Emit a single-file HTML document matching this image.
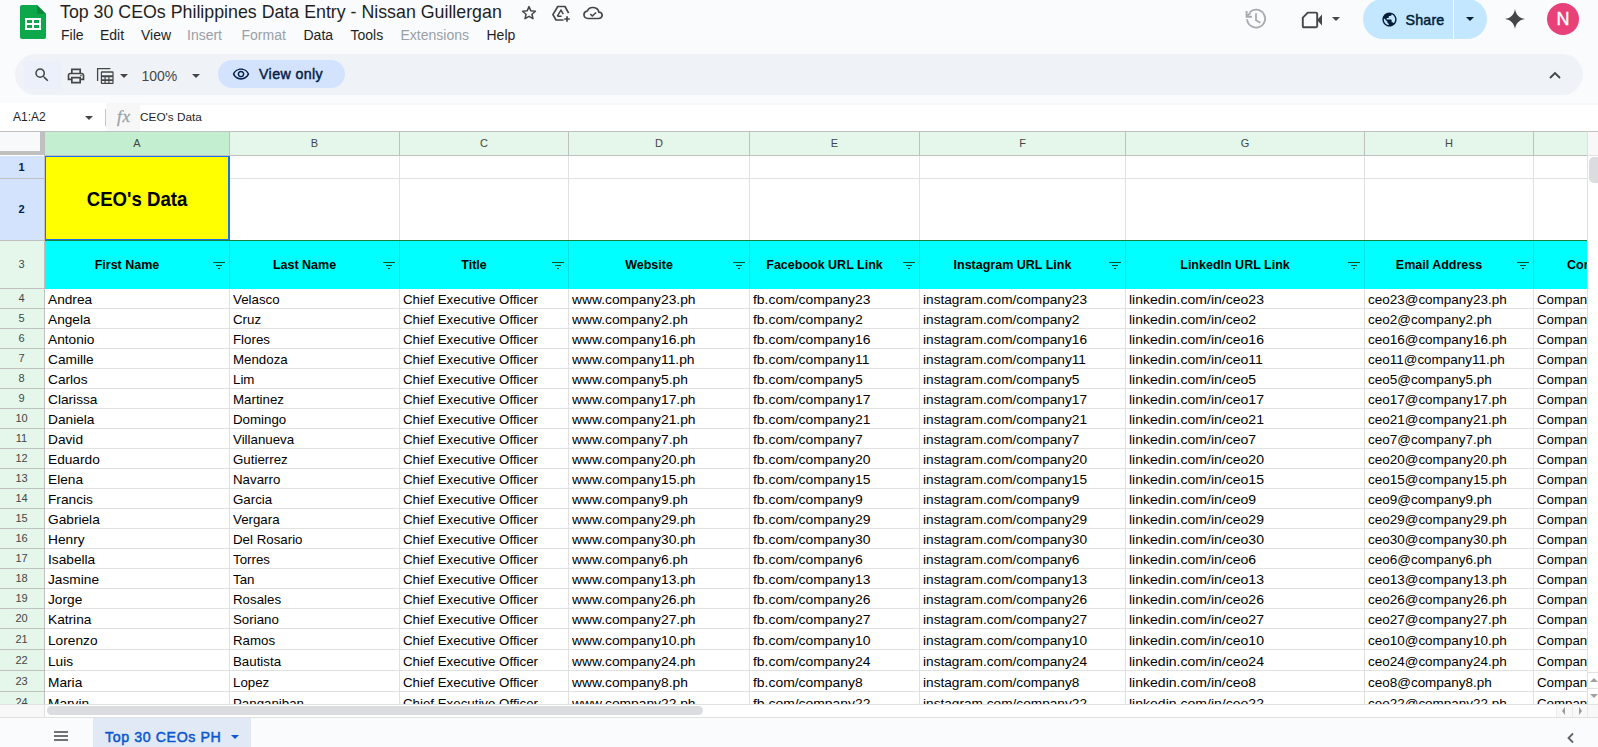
<!DOCTYPE html>
<html><head><meta charset="utf-8"><style>
*{margin:0;padding:0;box-sizing:border-box}
html,body{width:1598px;height:747px;overflow:hidden;background:#f9fbfd;font-family:"Liberation Sans",sans-serif;position:relative}
.a{position:absolute;white-space:nowrap}
.t{position:absolute;white-space:nowrap;line-height:1}
.hl{position:absolute;height:1px}
.vl{position:absolute;width:1px}
.c{position:absolute;white-space:nowrap;font-size:13.3px;color:#000;line-height:1;overflow:hidden}
</style></head><body>

<svg class="a" style="left:20px;top:5px" width="26" height="35" viewBox="0 0 26 35">
<path d="M2 0H17L26 9V32Q26 34 24 34H2Q0 34 0 32V2Q0 0 2 0Z" fill="#0ca84b"/>
<path d="M17 0L26 9H17Z" fill="#078a3a"/>
<rect x="5" y="13" width="16" height="12" fill="#fff"/>
<rect x="7" y="15" width="5" height="3" fill="#0ca84b"/><rect x="14" y="15" width="5" height="3" fill="#0ca84b"/>
<rect x="7" y="20" width="5" height="3" fill="#0ca84b"/><rect x="14" y="20" width="5" height="3" fill="#0ca84b"/>
</svg>
<div class="t" style="left:60px;top:2px;font-size:17.8px;color:#1f1f1f;line-height:20px">Top 30 CEOs Philippines Data Entry - Nissan Guillergan</div>
<svg class="a" style="left:520px;top:4px" width="18" height="18" viewBox="0 0 24 24"><path d="M12 3.5l2.47 5.6 6.1.55-4.62 4.02 1.38 5.96L12 16.5l-5.33 3.13 1.38-5.96L3.43 9.65l6.1-.55z" fill="none" stroke="#444746" stroke-width="2" stroke-linejoin="round"/></svg>
<svg class="a" style="left:551px;top:4px" width="21" height="18" viewBox="0 0 21 18"><path d="M17.6 9.2L14 2.5H6.8L1.9 10.6 5 16H12.6" fill="none" stroke="#444746" stroke-width="1.7" stroke-linejoin="round"/><path d="M6.3 12.2L10 6.2 12.4 10.2M6.3 12.2H10.6" fill="none" stroke="#444746" stroke-width="1.5"/><path d="M16 12.2v5.6M13.2 15h5.6" stroke="#444746" stroke-width="1.7"/></svg>
<svg class="a" style="left:583px;top:6px" width="20" height="13.5" viewBox="0 0 20 15" preserveAspectRatio="none"><path d="M5 13.8H15.5A3.5 3.5 0 0 0 15.8 6.8 6 6 0 0 0 4.3 5.5 4.2 4.2 0 0 0 5 13.8Z" fill="none" stroke="#444746" stroke-width="1.7"/><path d="M7.3 9l2 2 3.8-3.8" fill="none" stroke="#444746" stroke-width="1.6"/></svg>
<div class="t" style="left:61px;top:27.4px;font-size:14px;color:#1f1f1f;line-height:16px">File</div>
<div class="t" style="left:100px;top:27.4px;font-size:14px;color:#1f1f1f;line-height:16px">Edit</div>
<div class="t" style="left:141px;top:27.4px;font-size:14px;color:#1f1f1f;line-height:16px">View</div>
<div class="t" style="left:187px;top:27.4px;font-size:14px;color:#9aa0a6;line-height:16px">Insert</div>
<div class="t" style="left:241.5px;top:27.4px;font-size:14px;color:#9aa0a6;line-height:16px">Format</div>
<div class="t" style="left:303.5px;top:27.4px;font-size:14px;color:#1f1f1f;line-height:16px">Data</div>
<div class="t" style="left:350.5px;top:27.4px;font-size:14px;color:#1f1f1f;line-height:16px">Tools</div>
<div class="t" style="left:400.5px;top:27.4px;font-size:14px;color:#9aa0a6;line-height:16px">Extensions</div>
<div class="t" style="left:486.5px;top:27.4px;font-size:14px;color:#1f1f1f;line-height:16px">Help</div>
<svg class="a" style="left:1244px;top:8px" width="24" height="22" viewBox="0 0 24 22"><path d="M5.6 4.4A9 9 0 1 1 3.1 11.3" fill="none" stroke="#a8abad" stroke-width="1.8"/><path d="M2.6 3V8.7H8" fill="none" stroke="#a8abad" stroke-width="1.9"/><path d="M2.6 8.7L6.4 4.9" stroke="#a8abad" stroke-width="1.9"/><path d="M12 5.3V12.2L16.4 14.8" fill="none" stroke="#a8abad" stroke-width="1.8"/></svg>
<svg class="a" style="left:1301px;top:11px" width="23" height="18" viewBox="0 0 23 18"><path d="M6.8 1.6H15Q16.2 1.6 16.2 2.8V15.1Q16.2 16.3 15 16.3H3Q1.8 16.3 1.8 15.1V6.6Z" fill="none" stroke="#444746" stroke-width="1.9" stroke-linejoin="round"/><path d="M16 9L21 3.6V14.4Z" fill="#444746"/></svg>
<div class="a" style="left:1332px;top:17px;width:0;height:0;border-left:4px solid transparent;border-right:4px solid transparent;border-top:4px solid #444746"></div>
<div class="a" style="left:1363px;top:-1px;width:124px;height:40px;border-radius:20px;background:#c2e7ff"></div>
<div class="a" style="left:1453px;top:-1px;width:1px;height:40px;background:#f9fbfd"></div>
<svg class="a" style="left:1381px;top:11px" width="17" height="17" viewBox="0 0 24 24"><path fill="#001d35" d="M12 2C6.48 2 2 6.48 2 12s4.48 10 10 10 10-4.48 10-10S17.52 2 12 2zm-1 17.93c-3.95-.49-7-3.85-7-7.93 0-.62.08-1.21.21-1.79L9 15v1c0 1.1.9 2 2 2v1.93zm6.9-2.54c-.26-.81-1-1.39-1.9-1.39h-1v-3c0-.55-.45-1-1-1H8v-2h2c.55 0 1-.45 1-1V7h2c1.1 0 2-.9 2-2v-.41c2.93 1.19 5 4.06 5 7.41 0 2.08-.8 3.97-2.1 5.39z"/></svg>
<div class="t" style="left:1405.5px;top:12px;font-size:14.3px;font-weight:normal;-webkit-text-stroke:0.45px #001d35;color:#001d35;line-height:16px;letter-spacing:0.15px">Share</div>
<div class="a" style="left:1465.5px;top:17px;width:0;height:0;border-left:4.5px solid transparent;border-right:4.5px solid transparent;border-top:4.5px solid #001d35"></div>
<svg class="a" style="left:1505px;top:9px" width="20" height="20" viewBox="0 0 20 20"><path d="M10 0C10.8 5.6 14.4 9.2 20 10C14.4 10.8 10.8 14.4 10 20C9.2 14.4 5.6 10.8 0 10C5.6 9.2 9.2 5.6 10 0Z" fill="#444746"/></svg>
<div class="a" style="left:1547px;top:3px;width:32px;height:32px;border-radius:50%;background:#e8417a"></div>
<div class="t" style="left:1547px;top:10px;width:32px;text-align:center;font-size:18px;color:#fff;-webkit-text-stroke:0.4px #fff;line-height:18px">N</div>
<div class="a" style="left:15px;top:54px;width:1568px;height:41px;border-radius:20.5px;background:#eff3f8"></div>
<div class="a" style="left:24px;top:61px;width:37px;height:28px;border-radius:2px;background:#ebf0fa"></div>
<svg class="a" style="left:33px;top:66px" width="18" height="18" viewBox="0 0 24 24"><path fill="#444746" d="M15.5 14h-.79l-.28-.27A6.47 6.47 0 0 0 16 9.5 6.5 6.5 0 1 0 9.5 16c1.61 0 3.09-.59 4.23-1.57l.27.28v.79l5 4.99L20.49 19l-4.99-5zm-6 0C7.01 14 5 11.99 5 9.5S7.01 5 9.5 5 14 7.01 14 9.5 11.99 14 9.5 14z"/></svg>
<svg class="a" style="left:66px;top:66px" width="20" height="20" viewBox="0 0 24 24"><path fill="#444746" d="M19 8h-1V3H6v5H5c-1.66 0-3 1.34-3 3v6h4v4h12v-4h4v-6c0-1.66-1.34-3-3-3zM8 5h8v3H8V5zm8 14H8v-4h8v4zm2-4v-2H6v2H4v-4c0-.55.45-1 1-1h14c.55 0 1 .45 1 1v4h-2z"/><circle cx="18" cy="11.5" r="1" fill="#444746"/></svg>
<svg class="a" style="left:96px;top:67px" width="19" height="18" viewBox="0 0 19 18"><path d="M1.6 14V1.6H14.4" fill="none" stroke="#444746" stroke-width="1.3"/><path fill="#444746" fill-rule="evenodd" d="M5.8 4.2H16.6Q17.6 4.2 17.6 5.2V16Q17.6 17 16.6 17H5.8Q4.8 17 4.8 16V5.2Q4.8 4.2 5.8 4.2ZM6 5.7V8.3H16.4V5.7ZM6 10.2V12.2H8.5V10.2ZM9.7 10.2V12.2H12.3V10.2ZM13.5 10.2V12.2H16.4V10.2ZM6 14V15.8H8.5V14ZM9.7 14V15.8H12.3V14ZM13.5 14V15.8H16.4V14Z"/></svg>
<div class="a" style="left:120px;top:74px;width:0;height:0;border-left:4px solid transparent;border-right:4px solid transparent;border-top:4px solid #444746"></div>
<div class="t" style="left:141.5px;top:69px;font-size:14px;color:#444746;line-height:14px">100%</div>
<div class="a" style="left:191.5px;top:74px;width:0;height:0;border-left:4px solid transparent;border-right:4px solid transparent;border-top:4px solid #444746"></div>
<div class="a" style="left:218px;top:60px;width:127px;height:28px;border-radius:14px;background:#d3e3fd"></div>
<svg class="a" style="left:231px;top:65px" width="20" height="18" viewBox="0 0 24 24"><path fill="#041e49" d="M12 6.5a9.77 9.77 0 0 1 8.82 5.5A9.77 9.77 0 0 1 12 17.5 9.77 9.77 0 0 1 3.18 12 9.77 9.77 0 0 1 12 6.5m0-2C7 4.5 2.73 7.61 1 12c1.73 4.39 6 7.5 11 7.5s9.27-3.11 11-7.5c-1.73-4.39-6-7.5-11-7.5zm0 5a2.5 2.5 0 0 1 0 5 2.5 2.5 0 0 1 0-5m0-2c-2.48 0-4.5 2.02-4.5 4.5s2.02 4.5 4.5 4.5 4.5-2.02 4.5-4.5-2.02-4.5-4.5-4.5z"/></svg>
<div class="t" style="left:259px;top:67px;font-size:14.2px;font-weight:normal;-webkit-text-stroke:0.45px #041e49;color:#041e49;line-height:14px;letter-spacing:0.4px">View only</div>
<svg class="a" style="left:1548px;top:70px" width="14" height="10" viewBox="0 0 14 10"><path d="M2 8L7 3 12 8" fill="none" stroke="#444746" stroke-width="1.9"/></svg>
<div class="a" style="left:0;top:103px;width:1598px;height:28px;background:#fff"></div>
<div class="t" style="left:13px;top:111px;font-size:12px;color:#1f1f1f;line-height:12px">A1:A2</div>
<div class="a" style="left:84.5px;top:116px;width:0;height:0;border-left:4px solid transparent;border-right:4px solid transparent;border-top:4px solid #444746"></div>
<div class="a" style="left:105px;top:109px;width:1px;height:17px;background:#c7c7c7"></div>
<div class="a" style="left:106px;top:103px;width:34px;height:28px;background:#f7f7f7"></div>
<div class="a" style="left:140px;top:103px;width:1458px;height:2px;background:#f8f8f8"></div>
<div class="t" style="left:117px;top:108px;letter-spacing:0.8px;font-size:17px;font-style:italic;color:#9aa0a6;-webkit-text-stroke:0.3px #9aa0a6;line-height:17px;font-family:'Liberation Serif',serif">fx</div>
<div class="t" style="left:140px;top:111px;font-size:11.8px;color:#1f1f1f;line-height:12px">CEO's Data</div>
<div class="a" style="left:0;top:131px;width:1598px;height:573px;background:#fff;overflow:hidden">
<div class="a" style="left:0px;top:0px;width:1598px;height:1px;background:#c0c0c0;"></div>
<div class="a" style="left:0px;top:1px;width:40px;height:19px;background:#f8f9fa;"></div>
<div class="a" style="left:40px;top:1px;width:4px;height:23px;background:#c0c0c0;"></div>
<div class="a" style="left:0px;top:20px;width:44px;height:4px;background:#c0c0c0;"></div>
<div class="a" style="left:45px;top:1px;width:184px;height:23px;background:#c4eed0;"></div>
<div class="a" style="left:229px;top:1px;width:1px;height:24px;background:#c0c0c0;"></div>
<div class="a" style="left:230px;top:1px;width:169px;height:23px;background:#e5f6ea;"></div>
<div class="a" style="left:399px;top:1px;width:1px;height:24px;background:#c0c0c0;"></div>
<div class="a" style="left:400px;top:1px;width:168px;height:23px;background:#e5f6ea;"></div>
<div class="a" style="left:568px;top:1px;width:1px;height:24px;background:#c0c0c0;"></div>
<div class="a" style="left:569px;top:1px;width:180px;height:23px;background:#e5f6ea;"></div>
<div class="a" style="left:749px;top:1px;width:1px;height:24px;background:#c0c0c0;"></div>
<div class="a" style="left:750px;top:1px;width:169px;height:23px;background:#e5f6ea;"></div>
<div class="a" style="left:919px;top:1px;width:1px;height:24px;background:#c0c0c0;"></div>
<div class="a" style="left:920px;top:1px;width:205px;height:23px;background:#e5f6ea;"></div>
<div class="a" style="left:1125px;top:1px;width:1px;height:24px;background:#c0c0c0;"></div>
<div class="a" style="left:1126px;top:1px;width:238px;height:23px;background:#e5f6ea;"></div>
<div class="a" style="left:1364px;top:1px;width:1px;height:24px;background:#c0c0c0;"></div>
<div class="a" style="left:1365px;top:1px;width:168px;height:23px;background:#e5f6ea;"></div>
<div class="a" style="left:1533px;top:1px;width:1px;height:24px;background:#c0c0c0;"></div>
<div class="a" style="left:1534px;top:1px;width:53px;height:23px;background:#e5f6ea;"></div>
<div class="a" style="left:1587px;top:1px;width:1px;height:24px;background:#c0c0c0;"></div>
<div class="a" style="left:44px;top:1px;width:1px;height:23px;background:#c0c0c0;"></div>
<div class="a" style="left:1588px;top:1px;width:10px;height:23px;background:#f8f8f8;"></div>
<div class="a" style="left:44px;top:24px;width:1544px;height:1px;background:#c0c0c0;"></div>
<div class="a" style="left:1588px;top:24px;width:10px;height:1px;background:#e1e1e1;"></div>
<div class="t" style="left:45px;top:6.5px;width:184px;text-align:center;font-size:11px;color:#444746;line-height:11px">A</div>
<div class="t" style="left:230px;top:6.5px;width:169px;text-align:center;font-size:11px;color:#444746;line-height:11px">B</div>
<div class="t" style="left:400px;top:6.5px;width:168px;text-align:center;font-size:11px;color:#444746;line-height:11px">C</div>
<div class="t" style="left:569px;top:6.5px;width:180px;text-align:center;font-size:11px;color:#444746;line-height:11px">D</div>
<div class="t" style="left:750px;top:6.5px;width:169px;text-align:center;font-size:11px;color:#444746;line-height:11px">E</div>
<div class="t" style="left:920px;top:6.5px;width:205px;text-align:center;font-size:11px;color:#444746;line-height:11px">F</div>
<div class="t" style="left:1126px;top:6.5px;width:238px;text-align:center;font-size:11px;color:#444746;line-height:11px">G</div>
<div class="t" style="left:1365px;top:6.5px;width:168px;text-align:center;font-size:11px;color:#444746;line-height:11px">H</div>
<div class="a" style="left:0px;top:25px;width:44px;height:22px;background:#d3e3fd;"></div>
<div class="a" style="left:0px;top:47px;width:44px;height:1px;background:#c0c0c0;"></div>
<div class="t" style="left:0;top:30.5px;width:43px;text-align:center;font-size:11px;font-weight:bold;color:#041e49;line-height:11px">1</div>
<div class="a" style="left:0px;top:48px;width:44px;height:61px;background:#d3e3fd;"></div>
<div class="a" style="left:0px;top:109px;width:44px;height:1px;background:#c0c0c0;"></div>
<div class="t" style="left:0;top:73.0px;width:43px;text-align:center;font-size:11px;font-weight:bold;color:#041e49;line-height:11px">2</div>
<div class="a" style="left:0px;top:110px;width:44px;height:47px;background:#e5f6ea;"></div>
<div class="a" style="left:0px;top:157px;width:44px;height:1px;background:#c0c0c0;"></div>
<div class="t" style="left:0;top:128.0px;width:43px;text-align:center;font-size:11px;font-weight:normal;color:#444746;line-height:11px">3</div>
<div class="a" style="left:0px;top:158px;width:44px;height:19px;background:#e5f6ea;"></div>
<div class="a" style="left:0px;top:177px;width:44px;height:1px;background:#c0c0c0;"></div>
<div class="t" style="left:0;top:162.0px;width:43px;text-align:center;font-size:11px;font-weight:normal;color:#444746;line-height:11px">4</div>
<div class="a" style="left:0px;top:178px;width:44px;height:19px;background:#e5f6ea;"></div>
<div class="a" style="left:0px;top:197px;width:44px;height:1px;background:#c0c0c0;"></div>
<div class="t" style="left:0;top:182.0px;width:43px;text-align:center;font-size:11px;font-weight:normal;color:#444746;line-height:11px">5</div>
<div class="a" style="left:0px;top:198px;width:44px;height:19px;background:#e5f6ea;"></div>
<div class="a" style="left:0px;top:217px;width:44px;height:1px;background:#c0c0c0;"></div>
<div class="t" style="left:0;top:202.0px;width:43px;text-align:center;font-size:11px;font-weight:normal;color:#444746;line-height:11px">6</div>
<div class="a" style="left:0px;top:218px;width:44px;height:19px;background:#e5f6ea;"></div>
<div class="a" style="left:0px;top:237px;width:44px;height:1px;background:#c0c0c0;"></div>
<div class="t" style="left:0;top:222.0px;width:43px;text-align:center;font-size:11px;font-weight:normal;color:#444746;line-height:11px">7</div>
<div class="a" style="left:0px;top:238px;width:44px;height:19px;background:#e5f6ea;"></div>
<div class="a" style="left:0px;top:257px;width:44px;height:1px;background:#c0c0c0;"></div>
<div class="t" style="left:0;top:242.0px;width:43px;text-align:center;font-size:11px;font-weight:normal;color:#444746;line-height:11px">8</div>
<div class="a" style="left:0px;top:258px;width:44px;height:19px;background:#e5f6ea;"></div>
<div class="a" style="left:0px;top:277px;width:44px;height:1px;background:#c0c0c0;"></div>
<div class="t" style="left:0;top:262.0px;width:43px;text-align:center;font-size:11px;font-weight:normal;color:#444746;line-height:11px">9</div>
<div class="a" style="left:0px;top:278px;width:44px;height:19px;background:#e5f6ea;"></div>
<div class="a" style="left:0px;top:297px;width:44px;height:1px;background:#c0c0c0;"></div>
<div class="t" style="left:0;top:282.0px;width:43px;text-align:center;font-size:11px;font-weight:normal;color:#444746;line-height:11px">10</div>
<div class="a" style="left:0px;top:298px;width:44px;height:19px;background:#e5f6ea;"></div>
<div class="a" style="left:0px;top:317px;width:44px;height:1px;background:#c0c0c0;"></div>
<div class="t" style="left:0;top:302.0px;width:43px;text-align:center;font-size:11px;font-weight:normal;color:#444746;line-height:11px">11</div>
<div class="a" style="left:0px;top:318px;width:44px;height:19px;background:#e5f6ea;"></div>
<div class="a" style="left:0px;top:337px;width:44px;height:1px;background:#c0c0c0;"></div>
<div class="t" style="left:0;top:322.0px;width:43px;text-align:center;font-size:11px;font-weight:normal;color:#444746;line-height:11px">12</div>
<div class="a" style="left:0px;top:338px;width:44px;height:19px;background:#e5f6ea;"></div>
<div class="a" style="left:0px;top:357px;width:44px;height:1px;background:#c0c0c0;"></div>
<div class="t" style="left:0;top:342.0px;width:43px;text-align:center;font-size:11px;font-weight:normal;color:#444746;line-height:11px">13</div>
<div class="a" style="left:0px;top:358px;width:44px;height:19px;background:#e5f6ea;"></div>
<div class="a" style="left:0px;top:377px;width:44px;height:1px;background:#c0c0c0;"></div>
<div class="t" style="left:0;top:362.0px;width:43px;text-align:center;font-size:11px;font-weight:normal;color:#444746;line-height:11px">14</div>
<div class="a" style="left:0px;top:378px;width:44px;height:19px;background:#e5f6ea;"></div>
<div class="a" style="left:0px;top:397px;width:44px;height:1px;background:#c0c0c0;"></div>
<div class="t" style="left:0;top:382.0px;width:43px;text-align:center;font-size:11px;font-weight:normal;color:#444746;line-height:11px">15</div>
<div class="a" style="left:0px;top:398px;width:44px;height:19px;background:#e5f6ea;"></div>
<div class="a" style="left:0px;top:417px;width:44px;height:1px;background:#c0c0c0;"></div>
<div class="t" style="left:0;top:402.0px;width:43px;text-align:center;font-size:11px;font-weight:normal;color:#444746;line-height:11px">16</div>
<div class="a" style="left:0px;top:418px;width:44px;height:19px;background:#e5f6ea;"></div>
<div class="a" style="left:0px;top:437px;width:44px;height:1px;background:#c0c0c0;"></div>
<div class="t" style="left:0;top:422.0px;width:43px;text-align:center;font-size:11px;font-weight:normal;color:#444746;line-height:11px">17</div>
<div class="a" style="left:0px;top:438px;width:44px;height:19px;background:#e5f6ea;"></div>
<div class="a" style="left:0px;top:457px;width:44px;height:1px;background:#c0c0c0;"></div>
<div class="t" style="left:0;top:442.0px;width:43px;text-align:center;font-size:11px;font-weight:normal;color:#444746;line-height:11px">18</div>
<div class="a" style="left:0px;top:458px;width:44px;height:19px;background:#e5f6ea;"></div>
<div class="a" style="left:0px;top:477px;width:44px;height:1px;background:#c0c0c0;"></div>
<div class="t" style="left:0;top:462.0px;width:43px;text-align:center;font-size:11px;font-weight:normal;color:#444746;line-height:11px">19</div>
<div class="a" style="left:0px;top:478px;width:44px;height:19px;background:#e5f6ea;"></div>
<div class="a" style="left:0px;top:497px;width:44px;height:1px;background:#c0c0c0;"></div>
<div class="t" style="left:0;top:482.0px;width:43px;text-align:center;font-size:11px;font-weight:normal;color:#444746;line-height:11px">20</div>
<div class="a" style="left:0px;top:498px;width:44px;height:20px;background:#e5f6ea;"></div>
<div class="a" style="left:0px;top:518px;width:44px;height:1px;background:#c0c0c0;"></div>
<div class="t" style="left:0;top:502.5px;width:43px;text-align:center;font-size:11px;font-weight:normal;color:#444746;line-height:11px">21</div>
<div class="a" style="left:0px;top:519px;width:44px;height:20px;background:#e5f6ea;"></div>
<div class="a" style="left:0px;top:539px;width:44px;height:1px;background:#c0c0c0;"></div>
<div class="t" style="left:0;top:523.5px;width:43px;text-align:center;font-size:11px;font-weight:normal;color:#444746;line-height:11px">22</div>
<div class="a" style="left:0px;top:540px;width:44px;height:20px;background:#e5f6ea;"></div>
<div class="a" style="left:0px;top:560px;width:44px;height:1px;background:#c0c0c0;"></div>
<div class="t" style="left:0;top:544.5px;width:43px;text-align:center;font-size:11px;font-weight:normal;color:#444746;line-height:11px">23</div>
<div class="a" style="left:0px;top:561px;width:44px;height:20px;background:#e5f6ea;"></div>
<div class="a" style="left:0px;top:581px;width:44px;height:1px;background:#c0c0c0;"></div>
<div class="t" style="left:0;top:565.5px;width:43px;text-align:center;font-size:11px;font-weight:normal;color:#444746;line-height:11px">24</div>
<div class="a" style="left:44px;top:25px;width:1px;height:548px;background:#c0c0c0;"></div>
<div class="a" style="left:45px;top:110px;width:1542px;height:48px;background:#00ffff;"></div>
<div class="a" style="left:45px;top:25px;width:184px;height:84px;background:#ffff00;"></div>
<div class="a" style="left:229px;top:47px;width:1358px;height:1px;background:#e1e1e1;"></div>
<div class="a" style="left:45px;top:177px;width:1542px;height:1px;background:#e1e1e1;"></div>
<div class="a" style="left:45px;top:197px;width:1542px;height:1px;background:#e1e1e1;"></div>
<div class="a" style="left:45px;top:217px;width:1542px;height:1px;background:#e1e1e1;"></div>
<div class="a" style="left:45px;top:237px;width:1542px;height:1px;background:#e1e1e1;"></div>
<div class="a" style="left:45px;top:257px;width:1542px;height:1px;background:#e1e1e1;"></div>
<div class="a" style="left:45px;top:277px;width:1542px;height:1px;background:#e1e1e1;"></div>
<div class="a" style="left:45px;top:297px;width:1542px;height:1px;background:#e1e1e1;"></div>
<div class="a" style="left:45px;top:317px;width:1542px;height:1px;background:#e1e1e1;"></div>
<div class="a" style="left:45px;top:337px;width:1542px;height:1px;background:#e1e1e1;"></div>
<div class="a" style="left:45px;top:357px;width:1542px;height:1px;background:#e1e1e1;"></div>
<div class="a" style="left:45px;top:377px;width:1542px;height:1px;background:#e1e1e1;"></div>
<div class="a" style="left:45px;top:397px;width:1542px;height:1px;background:#e1e1e1;"></div>
<div class="a" style="left:45px;top:417px;width:1542px;height:1px;background:#e1e1e1;"></div>
<div class="a" style="left:45px;top:437px;width:1542px;height:1px;background:#e1e1e1;"></div>
<div class="a" style="left:45px;top:457px;width:1542px;height:1px;background:#e1e1e1;"></div>
<div class="a" style="left:45px;top:477px;width:1542px;height:1px;background:#e1e1e1;"></div>
<div class="a" style="left:45px;top:497px;width:1542px;height:1px;background:#e1e1e1;"></div>
<div class="a" style="left:45px;top:518px;width:1542px;height:1px;background:#e1e1e1;"></div>
<div class="a" style="left:45px;top:539px;width:1542px;height:1px;background:#e1e1e1;"></div>
<div class="a" style="left:45px;top:560px;width:1542px;height:1px;background:#e1e1e1;"></div>
<div class="a" style="left:45px;top:581px;width:1542px;height:1px;background:#e1e1e1;"></div>
<div class="a" style="left:45px;top:109px;width:1542px;height:1px;background:#188038;"></div>
<div class="a" style="left:229px;top:25px;width:1px;height:84px;background:#e1e1e1;"></div>
<div class="a" style="left:229px;top:110px;width:1px;height:47px;background:#00e3e3;"></div>
<div class="a" style="left:229px;top:158px;width:1px;height:415px;background:#e1e1e1;"></div>
<div class="a" style="left:399px;top:25px;width:1px;height:84px;background:#e1e1e1;"></div>
<div class="a" style="left:399px;top:110px;width:1px;height:47px;background:#00e3e3;"></div>
<div class="a" style="left:399px;top:158px;width:1px;height:415px;background:#e1e1e1;"></div>
<div class="a" style="left:568px;top:25px;width:1px;height:84px;background:#e1e1e1;"></div>
<div class="a" style="left:568px;top:110px;width:1px;height:47px;background:#00e3e3;"></div>
<div class="a" style="left:568px;top:158px;width:1px;height:415px;background:#e1e1e1;"></div>
<div class="a" style="left:749px;top:25px;width:1px;height:84px;background:#e1e1e1;"></div>
<div class="a" style="left:749px;top:110px;width:1px;height:47px;background:#00e3e3;"></div>
<div class="a" style="left:749px;top:158px;width:1px;height:415px;background:#e1e1e1;"></div>
<div class="a" style="left:919px;top:25px;width:1px;height:84px;background:#e1e1e1;"></div>
<div class="a" style="left:919px;top:110px;width:1px;height:47px;background:#00e3e3;"></div>
<div class="a" style="left:919px;top:158px;width:1px;height:415px;background:#e1e1e1;"></div>
<div class="a" style="left:1125px;top:25px;width:1px;height:84px;background:#e1e1e1;"></div>
<div class="a" style="left:1125px;top:110px;width:1px;height:47px;background:#00e3e3;"></div>
<div class="a" style="left:1125px;top:158px;width:1px;height:415px;background:#e1e1e1;"></div>
<div class="a" style="left:1364px;top:25px;width:1px;height:84px;background:#e1e1e1;"></div>
<div class="a" style="left:1364px;top:110px;width:1px;height:47px;background:#00e3e3;"></div>
<div class="a" style="left:1364px;top:158px;width:1px;height:415px;background:#e1e1e1;"></div>
<div class="a" style="left:1533px;top:25px;width:1px;height:84px;background:#e1e1e1;"></div>
<div class="a" style="left:1533px;top:110px;width:1px;height:47px;background:#00e3e3;"></div>
<div class="a" style="left:1533px;top:158px;width:1px;height:415px;background:#e1e1e1;"></div>
<div class="a" style="left:1587px;top:0px;width:1px;height:573px;background:#e1e1e1;"></div>
<div class="a" style="left:45px;top:25px;width:184px;height:1px;background:#1a73e8;"></div>
<div class="a" style="left:45px;top:108px;width:184px;height:1px;background:#1a73e8;"></div>
<div class="a" style="left:45px;top:25px;width:1px;height:84px;background:#1a73e8;"></div>
<div class="a" style="left:228px;top:25px;width:2px;height:84px;background:#1a73e8;"></div>
<div class="t" style="left:45px;top:58px;width:184px;text-align:center;font-size:18.6px;font-weight:bold;color:#000;line-height:20px;transform:scaleY(1.12)">CEO's Data</div>
<div class="t" style="left:45px;top:126px;width:164px;text-align:center;font-size:12.5px;font-weight:bold;color:#000;line-height:16px">First Name</div>
<svg class="a" style="left:213px;top:131px" width="12" height="7" viewBox="0 0 12 7"><path d="M0 .5H12M3 3.5H9M5 6.5H7" stroke="#114d20" stroke-width="1"/></svg>
<div class="t" style="left:230px;top:126px;width:149px;text-align:center;font-size:12.5px;font-weight:bold;color:#000;line-height:16px">Last Name</div>
<svg class="a" style="left:383px;top:131px" width="12" height="7" viewBox="0 0 12 7"><path d="M0 .5H12M3 3.5H9M5 6.5H7" stroke="#114d20" stroke-width="1"/></svg>
<div class="t" style="left:400px;top:126px;width:148px;text-align:center;font-size:12.5px;font-weight:bold;color:#000;line-height:16px">Title</div>
<svg class="a" style="left:552px;top:131px" width="12" height="7" viewBox="0 0 12 7"><path d="M0 .5H12M3 3.5H9M5 6.5H7" stroke="#114d20" stroke-width="1"/></svg>
<div class="t" style="left:569px;top:126px;width:160px;text-align:center;font-size:12.5px;font-weight:bold;color:#000;line-height:16px">Website</div>
<svg class="a" style="left:733px;top:131px" width="12" height="7" viewBox="0 0 12 7"><path d="M0 .5H12M3 3.5H9M5 6.5H7" stroke="#114d20" stroke-width="1"/></svg>
<div class="t" style="left:750px;top:126px;width:149px;text-align:center;font-size:12.5px;font-weight:bold;color:#000;line-height:16px">Facebook URL Link</div>
<svg class="a" style="left:903px;top:131px" width="12" height="7" viewBox="0 0 12 7"><path d="M0 .5H12M3 3.5H9M5 6.5H7" stroke="#114d20" stroke-width="1"/></svg>
<div class="t" style="left:920px;top:126px;width:185px;text-align:center;font-size:12.5px;font-weight:bold;color:#000;line-height:16px">Instagram URL Link</div>
<svg class="a" style="left:1109px;top:131px" width="12" height="7" viewBox="0 0 12 7"><path d="M0 .5H12M3 3.5H9M5 6.5H7" stroke="#114d20" stroke-width="1"/></svg>
<div class="t" style="left:1126px;top:126px;width:218px;text-align:center;font-size:12.5px;font-weight:bold;color:#000;line-height:16px">LinkedIn URL Link</div>
<svg class="a" style="left:1348px;top:131px" width="12" height="7" viewBox="0 0 12 7"><path d="M0 .5H12M3 3.5H9M5 6.5H7" stroke="#114d20" stroke-width="1"/></svg>
<div class="t" style="left:1365px;top:126px;width:148px;text-align:center;font-size:12.5px;font-weight:bold;color:#000;line-height:16px">Email Address</div>
<svg class="a" style="left:1517px;top:131px" width="12" height="7" viewBox="0 0 12 7"><path d="M0 .5H12M3 3.5H9M5 6.5H7" stroke="#114d20" stroke-width="1"/></svg>
<div class="c" style="left:1534px;top:126px;width:53px;height:16px;font-weight:bold;font-size:12.5px;line-height:16px;padding-left:33px">Company</div>
<div class="c" style="left:47.5px;top:160.92px;width:178.9px;height:16px;line-height:16px;font-size:13.5px;transform:scaleX(1.0147);transform-origin:0 0">Andrea</div>
<div class="c" style="left:232.5px;top:160.92px;width:169.0px;height:16px;line-height:16px;font-size:13.5px;transform:scaleX(0.9852);transform-origin:0 0">Velasco</div>
<div class="c" style="left:402.5px;top:160.92px;width:168.0px;height:16px;line-height:16px;font-size:13.5px;transform:scaleX(0.9852);transform-origin:0 0">Chief Executive Officer</div>
<div class="c" style="left:571.5px;top:160.92px;width:173.6px;height:16px;line-height:16px;font-size:13.5px;transform:scaleX(1.0226);transform-origin:0 0">www.company23.ph</div>
<div class="c" style="left:752.5px;top:160.92px;width:161.7px;height:16px;line-height:16px;font-size:13.5px;transform:scaleX(1.0295);transform-origin:0 0">fb.com/company23</div>
<div class="c" style="left:922.5px;top:160.92px;width:200.1px;height:16px;line-height:16px;font-size:13.5px;transform:scaleX(1.0118);transform-origin:0 0">instagram.com/company23</div>
<div class="c" style="left:1128.5px;top:160.92px;width:226.6px;height:16px;line-height:16px;font-size:13.5px;transform:scaleX(1.0394);transform-origin:0 0">linkedin.com/in/ceo23</div>
<div class="c" style="left:1367.5px;top:160.92px;width:165.8px;height:16px;line-height:16px;font-size:13.5px;transform:scaleX(0.9980);transform-origin:0 0">ceo23@company23.ph</div>
<div class="c" style="left:1536.5px;top:160.92px;width:51.3px;height:16px;line-height:16px;font-size:13.5px;transform:scaleX(0.9852);transform-origin:0 0">Company</div>
<div class="c" style="left:47.5px;top:180.92px;width:178.9px;height:16px;line-height:16px;font-size:13.5px;transform:scaleX(1.0147);transform-origin:0 0">Angela</div>
<div class="c" style="left:232.5px;top:180.92px;width:169.0px;height:16px;line-height:16px;font-size:13.5px;transform:scaleX(0.9852);transform-origin:0 0">Cruz</div>
<div class="c" style="left:402.5px;top:180.92px;width:168.0px;height:16px;line-height:16px;font-size:13.5px;transform:scaleX(0.9852);transform-origin:0 0">Chief Executive Officer</div>
<div class="c" style="left:571.5px;top:180.92px;width:173.6px;height:16px;line-height:16px;font-size:13.5px;transform:scaleX(1.0226);transform-origin:0 0">www.company2.ph</div>
<div class="c" style="left:752.5px;top:180.92px;width:161.7px;height:16px;line-height:16px;font-size:13.5px;transform:scaleX(1.0295);transform-origin:0 0">fb.com/company2</div>
<div class="c" style="left:922.5px;top:180.92px;width:200.1px;height:16px;line-height:16px;font-size:13.5px;transform:scaleX(1.0118);transform-origin:0 0">instagram.com/company2</div>
<div class="c" style="left:1128.5px;top:180.92px;width:226.6px;height:16px;line-height:16px;font-size:13.5px;transform:scaleX(1.0394);transform-origin:0 0">linkedin.com/in/ceo2</div>
<div class="c" style="left:1367.5px;top:180.92px;width:165.8px;height:16px;line-height:16px;font-size:13.5px;transform:scaleX(0.9980);transform-origin:0 0">ceo2@company2.ph</div>
<div class="c" style="left:1536.5px;top:180.92px;width:51.3px;height:16px;line-height:16px;font-size:13.5px;transform:scaleX(0.9852);transform-origin:0 0">Company</div>
<div class="c" style="left:47.5px;top:200.92px;width:178.9px;height:16px;line-height:16px;font-size:13.5px;transform:scaleX(1.0147);transform-origin:0 0">Antonio</div>
<div class="c" style="left:232.5px;top:200.92px;width:169.0px;height:16px;line-height:16px;font-size:13.5px;transform:scaleX(0.9852);transform-origin:0 0">Flores</div>
<div class="c" style="left:402.5px;top:200.92px;width:168.0px;height:16px;line-height:16px;font-size:13.5px;transform:scaleX(0.9852);transform-origin:0 0">Chief Executive Officer</div>
<div class="c" style="left:571.5px;top:200.92px;width:173.6px;height:16px;line-height:16px;font-size:13.5px;transform:scaleX(1.0226);transform-origin:0 0">www.company16.ph</div>
<div class="c" style="left:752.5px;top:200.92px;width:161.7px;height:16px;line-height:16px;font-size:13.5px;transform:scaleX(1.0295);transform-origin:0 0">fb.com/company16</div>
<div class="c" style="left:922.5px;top:200.92px;width:200.1px;height:16px;line-height:16px;font-size:13.5px;transform:scaleX(1.0118);transform-origin:0 0">instagram.com/company16</div>
<div class="c" style="left:1128.5px;top:200.92px;width:226.6px;height:16px;line-height:16px;font-size:13.5px;transform:scaleX(1.0394);transform-origin:0 0">linkedin.com/in/ceo16</div>
<div class="c" style="left:1367.5px;top:200.92px;width:165.8px;height:16px;line-height:16px;font-size:13.5px;transform:scaleX(0.9980);transform-origin:0 0">ceo16@company16.ph</div>
<div class="c" style="left:1536.5px;top:200.92px;width:51.3px;height:16px;line-height:16px;font-size:13.5px;transform:scaleX(0.9852);transform-origin:0 0">Company</div>
<div class="c" style="left:47.5px;top:220.92px;width:178.9px;height:16px;line-height:16px;font-size:13.5px;transform:scaleX(1.0147);transform-origin:0 0">Camille</div>
<div class="c" style="left:232.5px;top:220.92px;width:169.0px;height:16px;line-height:16px;font-size:13.5px;transform:scaleX(0.9852);transform-origin:0 0">Mendoza</div>
<div class="c" style="left:402.5px;top:220.92px;width:168.0px;height:16px;line-height:16px;font-size:13.5px;transform:scaleX(0.9852);transform-origin:0 0">Chief Executive Officer</div>
<div class="c" style="left:571.5px;top:220.92px;width:173.6px;height:16px;line-height:16px;font-size:13.5px;transform:scaleX(1.0226);transform-origin:0 0">www.company11.ph</div>
<div class="c" style="left:752.5px;top:220.92px;width:161.7px;height:16px;line-height:16px;font-size:13.5px;transform:scaleX(1.0295);transform-origin:0 0">fb.com/company11</div>
<div class="c" style="left:922.5px;top:220.92px;width:200.1px;height:16px;line-height:16px;font-size:13.5px;transform:scaleX(1.0118);transform-origin:0 0">instagram.com/company11</div>
<div class="c" style="left:1128.5px;top:220.92px;width:226.6px;height:16px;line-height:16px;font-size:13.5px;transform:scaleX(1.0394);transform-origin:0 0">linkedin.com/in/ceo11</div>
<div class="c" style="left:1367.5px;top:220.92px;width:165.8px;height:16px;line-height:16px;font-size:13.5px;transform:scaleX(0.9980);transform-origin:0 0">ceo11@company11.ph</div>
<div class="c" style="left:1536.5px;top:220.92px;width:51.3px;height:16px;line-height:16px;font-size:13.5px;transform:scaleX(0.9852);transform-origin:0 0">Company</div>
<div class="c" style="left:47.5px;top:240.92px;width:178.9px;height:16px;line-height:16px;font-size:13.5px;transform:scaleX(1.0147);transform-origin:0 0">Carlos</div>
<div class="c" style="left:232.5px;top:240.92px;width:169.0px;height:16px;line-height:16px;font-size:13.5px;transform:scaleX(0.9852);transform-origin:0 0">Lim</div>
<div class="c" style="left:402.5px;top:240.92px;width:168.0px;height:16px;line-height:16px;font-size:13.5px;transform:scaleX(0.9852);transform-origin:0 0">Chief Executive Officer</div>
<div class="c" style="left:571.5px;top:240.92px;width:173.6px;height:16px;line-height:16px;font-size:13.5px;transform:scaleX(1.0226);transform-origin:0 0">www.company5.ph</div>
<div class="c" style="left:752.5px;top:240.92px;width:161.7px;height:16px;line-height:16px;font-size:13.5px;transform:scaleX(1.0295);transform-origin:0 0">fb.com/company5</div>
<div class="c" style="left:922.5px;top:240.92px;width:200.1px;height:16px;line-height:16px;font-size:13.5px;transform:scaleX(1.0118);transform-origin:0 0">instagram.com/company5</div>
<div class="c" style="left:1128.5px;top:240.92px;width:226.6px;height:16px;line-height:16px;font-size:13.5px;transform:scaleX(1.0394);transform-origin:0 0">linkedin.com/in/ceo5</div>
<div class="c" style="left:1367.5px;top:240.92px;width:165.8px;height:16px;line-height:16px;font-size:13.5px;transform:scaleX(0.9980);transform-origin:0 0">ceo5@company5.ph</div>
<div class="c" style="left:1536.5px;top:240.92px;width:51.3px;height:16px;line-height:16px;font-size:13.5px;transform:scaleX(0.9852);transform-origin:0 0">Company</div>
<div class="c" style="left:47.5px;top:260.92px;width:178.9px;height:16px;line-height:16px;font-size:13.5px;transform:scaleX(1.0147);transform-origin:0 0">Clarissa</div>
<div class="c" style="left:232.5px;top:260.92px;width:169.0px;height:16px;line-height:16px;font-size:13.5px;transform:scaleX(0.9852);transform-origin:0 0">Martinez</div>
<div class="c" style="left:402.5px;top:260.92px;width:168.0px;height:16px;line-height:16px;font-size:13.5px;transform:scaleX(0.9852);transform-origin:0 0">Chief Executive Officer</div>
<div class="c" style="left:571.5px;top:260.92px;width:173.6px;height:16px;line-height:16px;font-size:13.5px;transform:scaleX(1.0226);transform-origin:0 0">www.company17.ph</div>
<div class="c" style="left:752.5px;top:260.92px;width:161.7px;height:16px;line-height:16px;font-size:13.5px;transform:scaleX(1.0295);transform-origin:0 0">fb.com/company17</div>
<div class="c" style="left:922.5px;top:260.92px;width:200.1px;height:16px;line-height:16px;font-size:13.5px;transform:scaleX(1.0118);transform-origin:0 0">instagram.com/company17</div>
<div class="c" style="left:1128.5px;top:260.92px;width:226.6px;height:16px;line-height:16px;font-size:13.5px;transform:scaleX(1.0394);transform-origin:0 0">linkedin.com/in/ceo17</div>
<div class="c" style="left:1367.5px;top:260.92px;width:165.8px;height:16px;line-height:16px;font-size:13.5px;transform:scaleX(0.9980);transform-origin:0 0">ceo17@company17.ph</div>
<div class="c" style="left:1536.5px;top:260.92px;width:51.3px;height:16px;line-height:16px;font-size:13.5px;transform:scaleX(0.9852);transform-origin:0 0">Company</div>
<div class="c" style="left:47.5px;top:280.92px;width:178.9px;height:16px;line-height:16px;font-size:13.5px;transform:scaleX(1.0147);transform-origin:0 0">Daniela</div>
<div class="c" style="left:232.5px;top:280.92px;width:169.0px;height:16px;line-height:16px;font-size:13.5px;transform:scaleX(0.9852);transform-origin:0 0">Domingo</div>
<div class="c" style="left:402.5px;top:280.92px;width:168.0px;height:16px;line-height:16px;font-size:13.5px;transform:scaleX(0.9852);transform-origin:0 0">Chief Executive Officer</div>
<div class="c" style="left:571.5px;top:280.92px;width:173.6px;height:16px;line-height:16px;font-size:13.5px;transform:scaleX(1.0226);transform-origin:0 0">www.company21.ph</div>
<div class="c" style="left:752.5px;top:280.92px;width:161.7px;height:16px;line-height:16px;font-size:13.5px;transform:scaleX(1.0295);transform-origin:0 0">fb.com/company21</div>
<div class="c" style="left:922.5px;top:280.92px;width:200.1px;height:16px;line-height:16px;font-size:13.5px;transform:scaleX(1.0118);transform-origin:0 0">instagram.com/company21</div>
<div class="c" style="left:1128.5px;top:280.92px;width:226.6px;height:16px;line-height:16px;font-size:13.5px;transform:scaleX(1.0394);transform-origin:0 0">linkedin.com/in/ceo21</div>
<div class="c" style="left:1367.5px;top:280.92px;width:165.8px;height:16px;line-height:16px;font-size:13.5px;transform:scaleX(0.9980);transform-origin:0 0">ceo21@company21.ph</div>
<div class="c" style="left:1536.5px;top:280.92px;width:51.3px;height:16px;line-height:16px;font-size:13.5px;transform:scaleX(0.9852);transform-origin:0 0">Company</div>
<div class="c" style="left:47.5px;top:300.92px;width:178.9px;height:16px;line-height:16px;font-size:13.5px;transform:scaleX(1.0147);transform-origin:0 0">David</div>
<div class="c" style="left:232.5px;top:300.92px;width:169.0px;height:16px;line-height:16px;font-size:13.5px;transform:scaleX(0.9852);transform-origin:0 0">Villanueva</div>
<div class="c" style="left:402.5px;top:300.92px;width:168.0px;height:16px;line-height:16px;font-size:13.5px;transform:scaleX(0.9852);transform-origin:0 0">Chief Executive Officer</div>
<div class="c" style="left:571.5px;top:300.92px;width:173.6px;height:16px;line-height:16px;font-size:13.5px;transform:scaleX(1.0226);transform-origin:0 0">www.company7.ph</div>
<div class="c" style="left:752.5px;top:300.92px;width:161.7px;height:16px;line-height:16px;font-size:13.5px;transform:scaleX(1.0295);transform-origin:0 0">fb.com/company7</div>
<div class="c" style="left:922.5px;top:300.92px;width:200.1px;height:16px;line-height:16px;font-size:13.5px;transform:scaleX(1.0118);transform-origin:0 0">instagram.com/company7</div>
<div class="c" style="left:1128.5px;top:300.92px;width:226.6px;height:16px;line-height:16px;font-size:13.5px;transform:scaleX(1.0394);transform-origin:0 0">linkedin.com/in/ceo7</div>
<div class="c" style="left:1367.5px;top:300.92px;width:165.8px;height:16px;line-height:16px;font-size:13.5px;transform:scaleX(0.9980);transform-origin:0 0">ceo7@company7.ph</div>
<div class="c" style="left:1536.5px;top:300.92px;width:51.3px;height:16px;line-height:16px;font-size:13.5px;transform:scaleX(0.9852);transform-origin:0 0">Company</div>
<div class="c" style="left:47.5px;top:320.92px;width:178.9px;height:16px;line-height:16px;font-size:13.5px;transform:scaleX(1.0147);transform-origin:0 0">Eduardo</div>
<div class="c" style="left:232.5px;top:320.92px;width:169.0px;height:16px;line-height:16px;font-size:13.5px;transform:scaleX(0.9852);transform-origin:0 0">Gutierrez</div>
<div class="c" style="left:402.5px;top:320.92px;width:168.0px;height:16px;line-height:16px;font-size:13.5px;transform:scaleX(0.9852);transform-origin:0 0">Chief Executive Officer</div>
<div class="c" style="left:571.5px;top:320.92px;width:173.6px;height:16px;line-height:16px;font-size:13.5px;transform:scaleX(1.0226);transform-origin:0 0">www.company20.ph</div>
<div class="c" style="left:752.5px;top:320.92px;width:161.7px;height:16px;line-height:16px;font-size:13.5px;transform:scaleX(1.0295);transform-origin:0 0">fb.com/company20</div>
<div class="c" style="left:922.5px;top:320.92px;width:200.1px;height:16px;line-height:16px;font-size:13.5px;transform:scaleX(1.0118);transform-origin:0 0">instagram.com/company20</div>
<div class="c" style="left:1128.5px;top:320.92px;width:226.6px;height:16px;line-height:16px;font-size:13.5px;transform:scaleX(1.0394);transform-origin:0 0">linkedin.com/in/ceo20</div>
<div class="c" style="left:1367.5px;top:320.92px;width:165.8px;height:16px;line-height:16px;font-size:13.5px;transform:scaleX(0.9980);transform-origin:0 0">ceo20@company20.ph</div>
<div class="c" style="left:1536.5px;top:320.92px;width:51.3px;height:16px;line-height:16px;font-size:13.5px;transform:scaleX(0.9852);transform-origin:0 0">Company</div>
<div class="c" style="left:47.5px;top:340.92px;width:178.9px;height:16px;line-height:16px;font-size:13.5px;transform:scaleX(1.0147);transform-origin:0 0">Elena</div>
<div class="c" style="left:232.5px;top:340.92px;width:169.0px;height:16px;line-height:16px;font-size:13.5px;transform:scaleX(0.9852);transform-origin:0 0">Navarro</div>
<div class="c" style="left:402.5px;top:340.92px;width:168.0px;height:16px;line-height:16px;font-size:13.5px;transform:scaleX(0.9852);transform-origin:0 0">Chief Executive Officer</div>
<div class="c" style="left:571.5px;top:340.92px;width:173.6px;height:16px;line-height:16px;font-size:13.5px;transform:scaleX(1.0226);transform-origin:0 0">www.company15.ph</div>
<div class="c" style="left:752.5px;top:340.92px;width:161.7px;height:16px;line-height:16px;font-size:13.5px;transform:scaleX(1.0295);transform-origin:0 0">fb.com/company15</div>
<div class="c" style="left:922.5px;top:340.92px;width:200.1px;height:16px;line-height:16px;font-size:13.5px;transform:scaleX(1.0118);transform-origin:0 0">instagram.com/company15</div>
<div class="c" style="left:1128.5px;top:340.92px;width:226.6px;height:16px;line-height:16px;font-size:13.5px;transform:scaleX(1.0394);transform-origin:0 0">linkedin.com/in/ceo15</div>
<div class="c" style="left:1367.5px;top:340.92px;width:165.8px;height:16px;line-height:16px;font-size:13.5px;transform:scaleX(0.9980);transform-origin:0 0">ceo15@company15.ph</div>
<div class="c" style="left:1536.5px;top:340.92px;width:51.3px;height:16px;line-height:16px;font-size:13.5px;transform:scaleX(0.9852);transform-origin:0 0">Company</div>
<div class="c" style="left:47.5px;top:360.92px;width:178.9px;height:16px;line-height:16px;font-size:13.5px;transform:scaleX(1.0147);transform-origin:0 0">Francis</div>
<div class="c" style="left:232.5px;top:360.92px;width:169.0px;height:16px;line-height:16px;font-size:13.5px;transform:scaleX(0.9852);transform-origin:0 0">Garcia</div>
<div class="c" style="left:402.5px;top:360.92px;width:168.0px;height:16px;line-height:16px;font-size:13.5px;transform:scaleX(0.9852);transform-origin:0 0">Chief Executive Officer</div>
<div class="c" style="left:571.5px;top:360.92px;width:173.6px;height:16px;line-height:16px;font-size:13.5px;transform:scaleX(1.0226);transform-origin:0 0">www.company9.ph</div>
<div class="c" style="left:752.5px;top:360.92px;width:161.7px;height:16px;line-height:16px;font-size:13.5px;transform:scaleX(1.0295);transform-origin:0 0">fb.com/company9</div>
<div class="c" style="left:922.5px;top:360.92px;width:200.1px;height:16px;line-height:16px;font-size:13.5px;transform:scaleX(1.0118);transform-origin:0 0">instagram.com/company9</div>
<div class="c" style="left:1128.5px;top:360.92px;width:226.6px;height:16px;line-height:16px;font-size:13.5px;transform:scaleX(1.0394);transform-origin:0 0">linkedin.com/in/ceo9</div>
<div class="c" style="left:1367.5px;top:360.92px;width:165.8px;height:16px;line-height:16px;font-size:13.5px;transform:scaleX(0.9980);transform-origin:0 0">ceo9@company9.ph</div>
<div class="c" style="left:1536.5px;top:360.92px;width:51.3px;height:16px;line-height:16px;font-size:13.5px;transform:scaleX(0.9852);transform-origin:0 0">Company</div>
<div class="c" style="left:47.5px;top:380.92px;width:178.9px;height:16px;line-height:16px;font-size:13.5px;transform:scaleX(1.0147);transform-origin:0 0">Gabriela</div>
<div class="c" style="left:232.5px;top:380.92px;width:169.0px;height:16px;line-height:16px;font-size:13.5px;transform:scaleX(0.9852);transform-origin:0 0">Vergara</div>
<div class="c" style="left:402.5px;top:380.92px;width:168.0px;height:16px;line-height:16px;font-size:13.5px;transform:scaleX(0.9852);transform-origin:0 0">Chief Executive Officer</div>
<div class="c" style="left:571.5px;top:380.92px;width:173.6px;height:16px;line-height:16px;font-size:13.5px;transform:scaleX(1.0226);transform-origin:0 0">www.company29.ph</div>
<div class="c" style="left:752.5px;top:380.92px;width:161.7px;height:16px;line-height:16px;font-size:13.5px;transform:scaleX(1.0295);transform-origin:0 0">fb.com/company29</div>
<div class="c" style="left:922.5px;top:380.92px;width:200.1px;height:16px;line-height:16px;font-size:13.5px;transform:scaleX(1.0118);transform-origin:0 0">instagram.com/company29</div>
<div class="c" style="left:1128.5px;top:380.92px;width:226.6px;height:16px;line-height:16px;font-size:13.5px;transform:scaleX(1.0394);transform-origin:0 0">linkedin.com/in/ceo29</div>
<div class="c" style="left:1367.5px;top:380.92px;width:165.8px;height:16px;line-height:16px;font-size:13.5px;transform:scaleX(0.9980);transform-origin:0 0">ceo29@company29.ph</div>
<div class="c" style="left:1536.5px;top:380.92px;width:51.3px;height:16px;line-height:16px;font-size:13.5px;transform:scaleX(0.9852);transform-origin:0 0">Company</div>
<div class="c" style="left:47.5px;top:400.92px;width:178.9px;height:16px;line-height:16px;font-size:13.5px;transform:scaleX(1.0147);transform-origin:0 0">Henry</div>
<div class="c" style="left:232.5px;top:400.92px;width:169.0px;height:16px;line-height:16px;font-size:13.5px;transform:scaleX(0.9852);transform-origin:0 0">Del Rosario</div>
<div class="c" style="left:402.5px;top:400.92px;width:168.0px;height:16px;line-height:16px;font-size:13.5px;transform:scaleX(0.9852);transform-origin:0 0">Chief Executive Officer</div>
<div class="c" style="left:571.5px;top:400.92px;width:173.6px;height:16px;line-height:16px;font-size:13.5px;transform:scaleX(1.0226);transform-origin:0 0">www.company30.ph</div>
<div class="c" style="left:752.5px;top:400.92px;width:161.7px;height:16px;line-height:16px;font-size:13.5px;transform:scaleX(1.0295);transform-origin:0 0">fb.com/company30</div>
<div class="c" style="left:922.5px;top:400.92px;width:200.1px;height:16px;line-height:16px;font-size:13.5px;transform:scaleX(1.0118);transform-origin:0 0">instagram.com/company30</div>
<div class="c" style="left:1128.5px;top:400.92px;width:226.6px;height:16px;line-height:16px;font-size:13.5px;transform:scaleX(1.0394);transform-origin:0 0">linkedin.com/in/ceo30</div>
<div class="c" style="left:1367.5px;top:400.92px;width:165.8px;height:16px;line-height:16px;font-size:13.5px;transform:scaleX(0.9980);transform-origin:0 0">ceo30@company30.ph</div>
<div class="c" style="left:1536.5px;top:400.92px;width:51.3px;height:16px;line-height:16px;font-size:13.5px;transform:scaleX(0.9852);transform-origin:0 0">Company</div>
<div class="c" style="left:47.5px;top:420.92px;width:178.9px;height:16px;line-height:16px;font-size:13.5px;transform:scaleX(1.0147);transform-origin:0 0">Isabella</div>
<div class="c" style="left:232.5px;top:420.92px;width:169.0px;height:16px;line-height:16px;font-size:13.5px;transform:scaleX(0.9852);transform-origin:0 0">Torres</div>
<div class="c" style="left:402.5px;top:420.92px;width:168.0px;height:16px;line-height:16px;font-size:13.5px;transform:scaleX(0.9852);transform-origin:0 0">Chief Executive Officer</div>
<div class="c" style="left:571.5px;top:420.92px;width:173.6px;height:16px;line-height:16px;font-size:13.5px;transform:scaleX(1.0226);transform-origin:0 0">www.company6.ph</div>
<div class="c" style="left:752.5px;top:420.92px;width:161.7px;height:16px;line-height:16px;font-size:13.5px;transform:scaleX(1.0295);transform-origin:0 0">fb.com/company6</div>
<div class="c" style="left:922.5px;top:420.92px;width:200.1px;height:16px;line-height:16px;font-size:13.5px;transform:scaleX(1.0118);transform-origin:0 0">instagram.com/company6</div>
<div class="c" style="left:1128.5px;top:420.92px;width:226.6px;height:16px;line-height:16px;font-size:13.5px;transform:scaleX(1.0394);transform-origin:0 0">linkedin.com/in/ceo6</div>
<div class="c" style="left:1367.5px;top:420.92px;width:165.8px;height:16px;line-height:16px;font-size:13.5px;transform:scaleX(0.9980);transform-origin:0 0">ceo6@company6.ph</div>
<div class="c" style="left:1536.5px;top:420.92px;width:51.3px;height:16px;line-height:16px;font-size:13.5px;transform:scaleX(0.9852);transform-origin:0 0">Company</div>
<div class="c" style="left:47.5px;top:440.92px;width:178.9px;height:16px;line-height:16px;font-size:13.5px;transform:scaleX(1.0147);transform-origin:0 0">Jasmine</div>
<div class="c" style="left:232.5px;top:440.92px;width:169.0px;height:16px;line-height:16px;font-size:13.5px;transform:scaleX(0.9852);transform-origin:0 0">Tan</div>
<div class="c" style="left:402.5px;top:440.92px;width:168.0px;height:16px;line-height:16px;font-size:13.5px;transform:scaleX(0.9852);transform-origin:0 0">Chief Executive Officer</div>
<div class="c" style="left:571.5px;top:440.92px;width:173.6px;height:16px;line-height:16px;font-size:13.5px;transform:scaleX(1.0226);transform-origin:0 0">www.company13.ph</div>
<div class="c" style="left:752.5px;top:440.92px;width:161.7px;height:16px;line-height:16px;font-size:13.5px;transform:scaleX(1.0295);transform-origin:0 0">fb.com/company13</div>
<div class="c" style="left:922.5px;top:440.92px;width:200.1px;height:16px;line-height:16px;font-size:13.5px;transform:scaleX(1.0118);transform-origin:0 0">instagram.com/company13</div>
<div class="c" style="left:1128.5px;top:440.92px;width:226.6px;height:16px;line-height:16px;font-size:13.5px;transform:scaleX(1.0394);transform-origin:0 0">linkedin.com/in/ceo13</div>
<div class="c" style="left:1367.5px;top:440.92px;width:165.8px;height:16px;line-height:16px;font-size:13.5px;transform:scaleX(0.9980);transform-origin:0 0">ceo13@company13.ph</div>
<div class="c" style="left:1536.5px;top:440.92px;width:51.3px;height:16px;line-height:16px;font-size:13.5px;transform:scaleX(0.9852);transform-origin:0 0">Company</div>
<div class="c" style="left:47.5px;top:460.92px;width:178.9px;height:16px;line-height:16px;font-size:13.5px;transform:scaleX(1.0147);transform-origin:0 0">Jorge</div>
<div class="c" style="left:232.5px;top:460.92px;width:169.0px;height:16px;line-height:16px;font-size:13.5px;transform:scaleX(0.9852);transform-origin:0 0">Rosales</div>
<div class="c" style="left:402.5px;top:460.92px;width:168.0px;height:16px;line-height:16px;font-size:13.5px;transform:scaleX(0.9852);transform-origin:0 0">Chief Executive Officer</div>
<div class="c" style="left:571.5px;top:460.92px;width:173.6px;height:16px;line-height:16px;font-size:13.5px;transform:scaleX(1.0226);transform-origin:0 0">www.company26.ph</div>
<div class="c" style="left:752.5px;top:460.92px;width:161.7px;height:16px;line-height:16px;font-size:13.5px;transform:scaleX(1.0295);transform-origin:0 0">fb.com/company26</div>
<div class="c" style="left:922.5px;top:460.92px;width:200.1px;height:16px;line-height:16px;font-size:13.5px;transform:scaleX(1.0118);transform-origin:0 0">instagram.com/company26</div>
<div class="c" style="left:1128.5px;top:460.92px;width:226.6px;height:16px;line-height:16px;font-size:13.5px;transform:scaleX(1.0394);transform-origin:0 0">linkedin.com/in/ceo26</div>
<div class="c" style="left:1367.5px;top:460.92px;width:165.8px;height:16px;line-height:16px;font-size:13.5px;transform:scaleX(0.9980);transform-origin:0 0">ceo26@company26.ph</div>
<div class="c" style="left:1536.5px;top:460.92px;width:51.3px;height:16px;line-height:16px;font-size:13.5px;transform:scaleX(0.9852);transform-origin:0 0">Company</div>
<div class="c" style="left:47.5px;top:480.92px;width:178.9px;height:16px;line-height:16px;font-size:13.5px;transform:scaleX(1.0147);transform-origin:0 0">Katrina</div>
<div class="c" style="left:232.5px;top:480.92px;width:169.0px;height:16px;line-height:16px;font-size:13.5px;transform:scaleX(0.9852);transform-origin:0 0">Soriano</div>
<div class="c" style="left:402.5px;top:480.92px;width:168.0px;height:16px;line-height:16px;font-size:13.5px;transform:scaleX(0.9852);transform-origin:0 0">Chief Executive Officer</div>
<div class="c" style="left:571.5px;top:480.92px;width:173.6px;height:16px;line-height:16px;font-size:13.5px;transform:scaleX(1.0226);transform-origin:0 0">www.company27.ph</div>
<div class="c" style="left:752.5px;top:480.92px;width:161.7px;height:16px;line-height:16px;font-size:13.5px;transform:scaleX(1.0295);transform-origin:0 0">fb.com/company27</div>
<div class="c" style="left:922.5px;top:480.92px;width:200.1px;height:16px;line-height:16px;font-size:13.5px;transform:scaleX(1.0118);transform-origin:0 0">instagram.com/company27</div>
<div class="c" style="left:1128.5px;top:480.92px;width:226.6px;height:16px;line-height:16px;font-size:13.5px;transform:scaleX(1.0394);transform-origin:0 0">linkedin.com/in/ceo27</div>
<div class="c" style="left:1367.5px;top:480.92px;width:165.8px;height:16px;line-height:16px;font-size:13.5px;transform:scaleX(0.9980);transform-origin:0 0">ceo27@company27.ph</div>
<div class="c" style="left:1536.5px;top:480.92px;width:51.3px;height:16px;line-height:16px;font-size:13.5px;transform:scaleX(0.9852);transform-origin:0 0">Company</div>
<div class="c" style="left:47.5px;top:501.92px;width:178.9px;height:16px;line-height:16px;font-size:13.5px;transform:scaleX(1.0147);transform-origin:0 0">Lorenzo</div>
<div class="c" style="left:232.5px;top:501.92px;width:169.0px;height:16px;line-height:16px;font-size:13.5px;transform:scaleX(0.9852);transform-origin:0 0">Ramos</div>
<div class="c" style="left:402.5px;top:501.92px;width:168.0px;height:16px;line-height:16px;font-size:13.5px;transform:scaleX(0.9852);transform-origin:0 0">Chief Executive Officer</div>
<div class="c" style="left:571.5px;top:501.92px;width:173.6px;height:16px;line-height:16px;font-size:13.5px;transform:scaleX(1.0226);transform-origin:0 0">www.company10.ph</div>
<div class="c" style="left:752.5px;top:501.92px;width:161.7px;height:16px;line-height:16px;font-size:13.5px;transform:scaleX(1.0295);transform-origin:0 0">fb.com/company10</div>
<div class="c" style="left:922.5px;top:501.92px;width:200.1px;height:16px;line-height:16px;font-size:13.5px;transform:scaleX(1.0118);transform-origin:0 0">instagram.com/company10</div>
<div class="c" style="left:1128.5px;top:501.92px;width:226.6px;height:16px;line-height:16px;font-size:13.5px;transform:scaleX(1.0394);transform-origin:0 0">linkedin.com/in/ceo10</div>
<div class="c" style="left:1367.5px;top:501.92px;width:165.8px;height:16px;line-height:16px;font-size:13.5px;transform:scaleX(0.9980);transform-origin:0 0">ceo10@company10.ph</div>
<div class="c" style="left:1536.5px;top:501.92px;width:51.3px;height:16px;line-height:16px;font-size:13.5px;transform:scaleX(0.9852);transform-origin:0 0">Company</div>
<div class="c" style="left:47.5px;top:522.92px;width:178.9px;height:16px;line-height:16px;font-size:13.5px;transform:scaleX(1.0147);transform-origin:0 0">Luis</div>
<div class="c" style="left:232.5px;top:522.92px;width:169.0px;height:16px;line-height:16px;font-size:13.5px;transform:scaleX(0.9852);transform-origin:0 0">Bautista</div>
<div class="c" style="left:402.5px;top:522.92px;width:168.0px;height:16px;line-height:16px;font-size:13.5px;transform:scaleX(0.9852);transform-origin:0 0">Chief Executive Officer</div>
<div class="c" style="left:571.5px;top:522.92px;width:173.6px;height:16px;line-height:16px;font-size:13.5px;transform:scaleX(1.0226);transform-origin:0 0">www.company24.ph</div>
<div class="c" style="left:752.5px;top:522.92px;width:161.7px;height:16px;line-height:16px;font-size:13.5px;transform:scaleX(1.0295);transform-origin:0 0">fb.com/company24</div>
<div class="c" style="left:922.5px;top:522.92px;width:200.1px;height:16px;line-height:16px;font-size:13.5px;transform:scaleX(1.0118);transform-origin:0 0">instagram.com/company24</div>
<div class="c" style="left:1128.5px;top:522.92px;width:226.6px;height:16px;line-height:16px;font-size:13.5px;transform:scaleX(1.0394);transform-origin:0 0">linkedin.com/in/ceo24</div>
<div class="c" style="left:1367.5px;top:522.92px;width:165.8px;height:16px;line-height:16px;font-size:13.5px;transform:scaleX(0.9980);transform-origin:0 0">ceo24@company24.ph</div>
<div class="c" style="left:1536.5px;top:522.92px;width:51.3px;height:16px;line-height:16px;font-size:13.5px;transform:scaleX(0.9852);transform-origin:0 0">Company</div>
<div class="c" style="left:47.5px;top:543.92px;width:178.9px;height:16px;line-height:16px;font-size:13.5px;transform:scaleX(1.0147);transform-origin:0 0">Maria</div>
<div class="c" style="left:232.5px;top:543.92px;width:169.0px;height:16px;line-height:16px;font-size:13.5px;transform:scaleX(0.9852);transform-origin:0 0">Lopez</div>
<div class="c" style="left:402.5px;top:543.92px;width:168.0px;height:16px;line-height:16px;font-size:13.5px;transform:scaleX(0.9852);transform-origin:0 0">Chief Executive Officer</div>
<div class="c" style="left:571.5px;top:543.92px;width:173.6px;height:16px;line-height:16px;font-size:13.5px;transform:scaleX(1.0226);transform-origin:0 0">www.company8.ph</div>
<div class="c" style="left:752.5px;top:543.92px;width:161.7px;height:16px;line-height:16px;font-size:13.5px;transform:scaleX(1.0295);transform-origin:0 0">fb.com/company8</div>
<div class="c" style="left:922.5px;top:543.92px;width:200.1px;height:16px;line-height:16px;font-size:13.5px;transform:scaleX(1.0118);transform-origin:0 0">instagram.com/company8</div>
<div class="c" style="left:1128.5px;top:543.92px;width:226.6px;height:16px;line-height:16px;font-size:13.5px;transform:scaleX(1.0394);transform-origin:0 0">linkedin.com/in/ceo8</div>
<div class="c" style="left:1367.5px;top:543.92px;width:165.8px;height:16px;line-height:16px;font-size:13.5px;transform:scaleX(0.9980);transform-origin:0 0">ceo8@company8.ph</div>
<div class="c" style="left:1536.5px;top:543.92px;width:51.3px;height:16px;line-height:16px;font-size:13.5px;transform:scaleX(0.9852);transform-origin:0 0">Company</div>
<div class="c" style="left:47.5px;top:564.92px;width:178.9px;height:16px;line-height:16px;font-size:13.5px;transform:scaleX(1.0147);transform-origin:0 0">Marvin</div>
<div class="c" style="left:232.5px;top:564.92px;width:169.0px;height:16px;line-height:16px;font-size:13.5px;transform:scaleX(0.9852);transform-origin:0 0">Panganiban</div>
<div class="c" style="left:402.5px;top:564.92px;width:168.0px;height:16px;line-height:16px;font-size:13.5px;transform:scaleX(0.9852);transform-origin:0 0">Chief Executive Officer</div>
<div class="c" style="left:571.5px;top:564.92px;width:173.6px;height:16px;line-height:16px;font-size:13.5px;transform:scaleX(1.0226);transform-origin:0 0">www.company22.ph</div>
<div class="c" style="left:752.5px;top:564.92px;width:161.7px;height:16px;line-height:16px;font-size:13.5px;transform:scaleX(1.0295);transform-origin:0 0">fb.com/company22</div>
<div class="c" style="left:922.5px;top:564.92px;width:200.1px;height:16px;line-height:16px;font-size:13.5px;transform:scaleX(1.0118);transform-origin:0 0">instagram.com/company22</div>
<div class="c" style="left:1128.5px;top:564.92px;width:226.6px;height:16px;line-height:16px;font-size:13.5px;transform:scaleX(1.0394);transform-origin:0 0">linkedin.com/in/ceo22</div>
<div class="c" style="left:1367.5px;top:564.92px;width:165.8px;height:16px;line-height:16px;font-size:13.5px;transform:scaleX(0.9980);transform-origin:0 0">ceo22@company22.ph</div>
<div class="c" style="left:1536.5px;top:564.92px;width:51.3px;height:16px;line-height:16px;font-size:13.5px;transform:scaleX(0.9852);transform-origin:0 0">Company</div>
<div class="a" style="left:1588px;top:25px;width:10px;height:548px;background:#ffffff;"></div>
<div class="a" style="left:1589px;top:26px;width:9px;height:26px;background:#dadce0;border-radius:5px 0 0 5px"></div>
<div class="a" style="left:1588px;top:541px;width:10px;height:1px;background:#e1e1e1;"></div>
<div class="a" style="left:1588px;top:557px;width:10px;height:1px;background:#e1e1e1;"></div>
</div>
<div class="a" style="left:1590px;top:678px;width:0;height:0;border-left:4px solid transparent;border-right:4px solid transparent;border-bottom:4px solid #a0a0a0"></div>
<div class="a" style="left:1590px;top:694px;width:0;height:0;border-left:4px solid transparent;border-right:4px solid transparent;border-top:4px solid #a0a0a0"></div>
<div class="a" style="left:0;top:704px;width:1598px;height:13px;background:#fff;border-top:1px solid #e1e1e1"></div>
<div class="a" style="left:1557px;top:705px;width:41px;height:12px;background:#f8f8f8"></div>
<div class="a" style="left:0;top:705px;width:44px;height:12px;background:#f8f8f8"></div>
<div class="a" style="left:44px;top:705px;width:1px;height:12px;background:#e1e1e1"></div>
<div class="a" style="left:47px;top:706px;width:656px;height:9px;border-radius:4.5px;background:#dadce0"></div>
<div class="a" style="left:1556px;top:705px;width:1px;height:12px;background:#ececec"></div>
<div class="a" style="left:1572px;top:705px;width:1px;height:12px;background:#e8e8e8"></div>
<div class="a" style="left:1587px;top:705px;width:1px;height:12px;background:#e8e8e8"></div>
<div class="a" style="left:1562px;top:707px;width:0;height:0;border-top:4px solid transparent;border-bottom:4px solid transparent;border-right:3.5px solid #999"></div>
<div class="a" style="left:1579px;top:707px;width:0;height:0;border-top:4px solid transparent;border-bottom:4px solid transparent;border-left:3.5px solid #999"></div>
<div class="a" style="left:0;top:717px;width:1598px;height:1px;background:#e1e1e1"></div>
<div class="a" style="left:0;top:718px;width:1598px;height:29px;background:#f9fbfd"></div>
<svg class="a" style="left:54px;top:731px" width="14" height="10" viewBox="0 0 14 10"><path d="M0 1H14M0 5H14M0 9H14" stroke="#444746" stroke-width="1.6"/></svg>
<div class="a" style="left:93px;top:718px;width:158px;height:29px;background:#e1e9f7"></div>
<div class="t" style="left:105px;top:730px;font-size:14.2px;font-weight:normal;-webkit-text-stroke:0.5px #0b57d0;color:#0b57d0;line-height:14px;letter-spacing:0.6px">Top 30 CEOs PH</div>
<div class="a" style="left:231px;top:735px;width:0;height:0;border-left:4px solid transparent;border-right:4px solid transparent;border-top:4px solid #0b57d0"></div>
<svg class="a" style="left:1566px;top:732px" width="10" height="12" viewBox="0 0 10 12"><path d="M7 1.5L2.5 6 7 10.5" fill="none" stroke="#5f6368" stroke-width="1.8"/></svg>
</body></html>
